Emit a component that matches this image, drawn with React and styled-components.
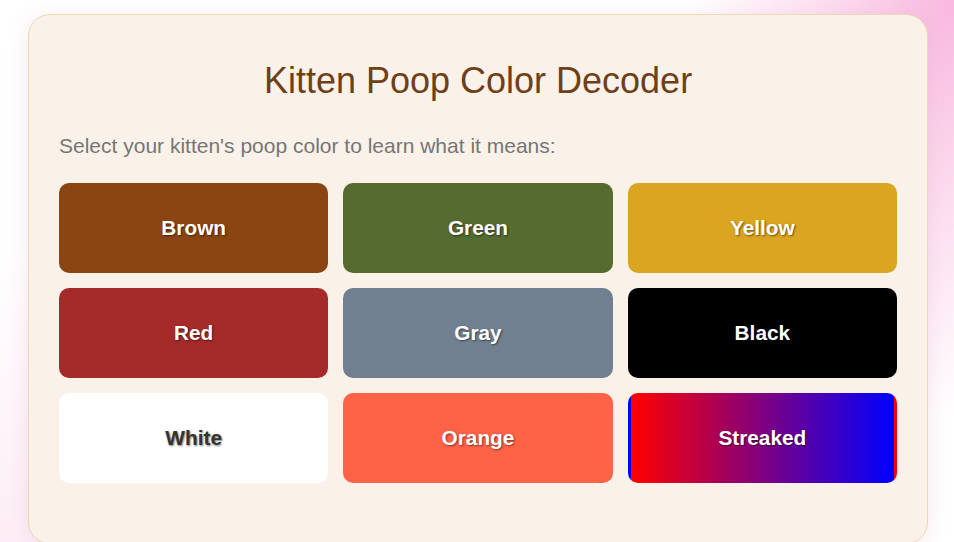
import React from "react";
import styled, { createGlobalStyle } from "styled-components";

const Global = createGlobalStyle`
  html, body { margin: 0; padding: 0; }
  body {
    min-height: 542px;
    overflow: hidden;
    font-family: "Liberation Sans", Arial, sans-serif;
    background:
      radial-gradient(ellipse 260px 420px at 100% 0%, rgba(248, 176, 220, 0.9) 0%, rgba(250, 190, 226, 0.55) 45%, rgba(255, 255, 255, 0) 100%),
      radial-gradient(ellipse 300px 300px at 0% 100%, rgba(252, 225, 240, 0.6) 0%, rgba(255,255,255,0) 100%),
      #ffffff;
  }
`;

const Page = styled.main`
  padding: 14px 0 0 2px;
  display: flex;
  justify-content: center;
`;

const Card = styled.section`
  box-sizing: border-box;
  width: 900px;
  min-height: 530px;
  padding: 30px 30px 60px;
  background: #faf2e8;
  border: 1px solid #ecd8b4;
  border-radius: 22px;
  box-shadow: 0 4px 22px rgba(200, 120, 160, 0.18);
`;

const Title = styled.h1`
  margin: 15px 0 0;
  text-align: center;
  font-size: 36px;
  font-weight: normal;
  color: #6f3f18;
  line-height: 42px;
`;

const Subtitle = styled.p`
  margin: 32px 0 0;
  font-size: 21px;
  color: #767676;
  line-height: 24px;
`;

const Grid = styled.div`
  margin-top: 25px;
  display: grid;
  grid-template-columns: repeat(3, 1fr);
  gap: 15px;
`;

const ColorButton = styled.button`
  box-sizing: border-box;
  height: 90px;
  border: 3px solid transparent;
  border-radius: 10px;
  background: ${(p) => p.$bg};
  color: ${(p) => (p.$dark ? "#333333" : "#ffffff")};
  font-family: "Liberation Sans", Arial, sans-serif;
  font-size: 20.8px;
  font-weight: bold;
  text-shadow: 1px 1px 2px rgba(0, 0, 0, 0.5);
  cursor: pointer;
`;

const colors = [
  { name: "Brown", bg: "#8B4513" },
  { name: "Green", bg: "#556B2F" },
  { name: "Yellow", bg: "#DAA520" },
  { name: "Red", bg: "#A52A2A" },
  { name: "Gray", bg: "#708090" },
  { name: "Black", bg: "#000000" },
  { name: "White", bg: "#ffffff", dark: true },
  { name: "Orange", bg: "#FF6347" },
  { name: "Streaked", bg: "linear-gradient(to right, #ff0000, #0000ff)" },
];

export default function App() {
  return (
    <>
      <Global />
      <Page>
        <Card>
          <Title>Kitten Poop Color Decoder</Title>
          <Subtitle>Select your kitten's poop color to learn what it means:</Subtitle>
          <Grid>
            {colors.map((c) => (
              <ColorButton key={c.name} $bg={c.bg} $dark={c.dark}>
                {c.name}
              </ColorButton>
            ))}
          </Grid>
        </Card>
      </Page>
    </>
  );
}
